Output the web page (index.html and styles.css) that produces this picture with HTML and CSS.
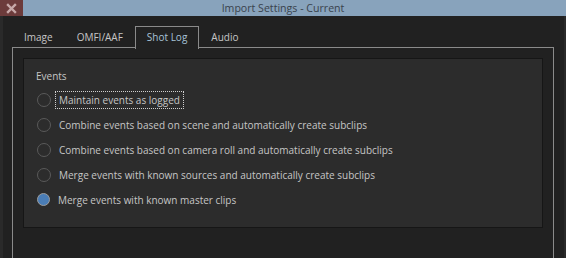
FILE: index.html
```html
<!DOCTYPE html>
<html lang="en">
<head>
  <meta charset="UTF-8" />
  <title>Import Settings - Current</title>
  <link rel="stylesheet" href="styles.css">
</head>
<body>
  <div class="window">
    <div class="titlebar">
      <button class="close-btn" aria-label="Close">
        <svg width="11" height="11" viewBox="0 0 11 11">
          <path d="M2 2 L9 9 M9 2 L2 9" stroke="#c7a9a9" stroke-width="2.4" stroke-linecap="square"/>
        </svg>
      </button>
      <div class="title">Import Settings - Current</div>
    </div>

    <div class="content">
      <div class="tabs">
        <div class="tab">Image</div>
        <div class="tab">OMFI/AAF</div>
        <div class="tab active">Shot Log</div>
        <div class="tab">Audio</div>
      </div>

      <div class="panel">
        <div class="group">
          <div class="group-title">Events</div>
          <label class="option">
            <span class="radio"></span>
            <span class="option-text focused">Maintain events as logged</span>
          </label>
          <label class="option">
            <span class="radio"></span>
            <span class="option-text">Combine events based on scene and automatically create subclips</span>
          </label>
          <label class="option">
            <span class="radio"></span>
            <span class="option-text">Combine events based on camera roll and automatically create subclips</span>
          </label>
          <label class="option">
            <span class="radio"></span>
            <span class="option-text">Merge events with known sources and automatically create subclips</span>
          </label>
          <label class="option">
            <span class="radio checked"></span>
            <span class="option-text">Merge events with known master clips</span>
          </label>
        </div>
      </div>
    </div>
  </div>
</body>
</html>
```

FILE: styles.css
```css
:root {
  --bg: #212121;
  --edge: #2a2a2a;
  --title-bg: #88a3bc;
  --title-text: #39424c;
  --close-bg: #6c3b3b;
  --line: #8a8a8a;
  --group-bg: #2c2c2c;
  --group-border: #161616;
  --text: #c6c6c6;
  --tab-active: #a8c3d8;
  --radio-ring: #5a5a5a;
  --radio-on: #4a7db6;
}

html, body {
  margin: 0;
  height: 100%;
  overflow: hidden;
  background: var(--bg);
}

body {
  font-family: "Open Sans", "Noto Sans", sans-serif;
  font-size: 10px;
  color: var(--text);
}

.window {
  height: 100%;
  border-left: 3px solid var(--edge);
  border-right: 2px solid var(--edge);
}

/* Title bar */
.titlebar {
  position: relative;
  height: 16px;
  margin-left: -3px;
  margin-right: -2px;
  background: var(--title-bg);
  display: flex;
  align-items: center;
  justify-content: center;
}

.close-btn {
  position: absolute;
  left: 0;
  top: 0;
  width: 23px;
  height: 16px;
  padding: 0;
  border: none;
  background: var(--close-bg);
  display: flex;
  align-items: center;
  justify-content: center;
}

.title {
  font-size: 10.6px;
  color: var(--title-text);
  line-height: 16px;
}

/* Tabs */
.content {
  padding: 10px 10px 0 9px;
}

.tabs {
  display: flex;
  height: 22px;
}

.tab {
  padding: 0 11px;
  line-height: 21px;
  border: 1px solid transparent;
  border-bottom: none;
}

.tab.active {
  color: var(--tab-active);
  border-color: var(--line);
  background: var(--bg);
  position: relative;
  z-index: 1;
  height: 22px;
}

.panel {
  border: 1px solid var(--line);
  margin-top: -1px;
  height: 400px;
  padding: 10px 10px 0 10px;
}

/* Events group */
.group {
  background: var(--group-bg);
  border: 1px solid var(--group-border);
  height: 158px;
  padding: 10px 12px 0 12px;
  box-sizing: content-box;
}

.group-title {
  line-height: 15px;
  margin-bottom: 3px;
}

.option {
  display: flex;
  align-items: center;
  height: 25px;
  margin-left: 1px;
}

.radio {
  width: 12px;
  height: 12px;
  border: 1px solid var(--radio-ring);
  border-radius: 50%;
  background: var(--group-bg);
  flex: none;
}

.radio.checked {
  background: var(--radio-on);
  border: 1.5px solid #9c9c9c;
  width: 11px;
  height: 11px;
}

.option-text {
  margin-left: 4px;
  padding: 1px 3px;
  line-height: 14px;
  border: 1px dotted transparent;
}

.option-text.focused {
  border-color: #cfcfcf;
}
```
